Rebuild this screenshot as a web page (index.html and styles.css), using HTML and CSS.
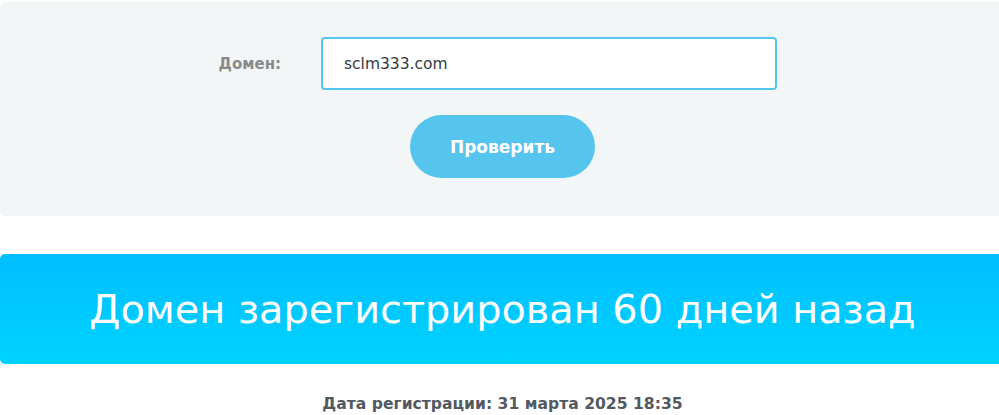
FILE: index.html
```html
<!DOCTYPE html>
<html lang="ru">
<head>
    <meta charset="UTF-8">
    <meta name="viewport" content="width=device-width, initial-scale=1.0">
    <title>Возраст домена</title>
    <link rel="stylesheet" href="styles.css">
</head>
<body>
    <div class="page">
        <form class="check-form" id="check-form">
            <div class="field">
                <label for="domain-input">Домен:</label>
                <input type="text" id="domain-input" value="sclm333.com" autocomplete="off">
            </div>
            <button type="submit" class="check-button">Проверить</button>
        </form>

        <div class="result-banner">Домен зарегистрирован 60 дней назад</div>

        <p class="result-date">Дата регистрации: 31 марта 2025 18:35</p>
    </div>
</body>
</html>
```

FILE: styles.css
```css
:root {
    --panel-bg: #f2f6f7;
    --accent: #56c5ed;
    --banner-top: #00bfff;
    --banner-bottom: #00d2ff;
    --label-color: #8a8a8a;
    --text-color: #333a40;
    --date-color: #535961;
}

html, body {
    overflow: hidden;
}

body {
    margin: 0;
    padding-top: 2px;
    background: #ffffff;
    font-family: "DejaVu Sans", Arial, sans-serif;
    color: var(--text-color);
}

.page {
    width: 1005px;
}

.check-form {
    display: flex;
    flex-direction: column;
    align-items: center;
    gap: 25px;
    padding: 35px 0 38px;
    background-color: var(--panel-bg);
    border-radius: 5px;
}

.field {
    display: grid;
    grid-template-columns: 281px 456px;
    column-gap: 40px;
    align-items: center;
    align-self: flex-start;
}

.field label {
    justify-self: end;
    font-size: 15px;
    font-weight: bold;
    color: var(--label-color);
}

.field input {
    box-sizing: border-box;
    height: 53px;
    padding: 0 22px 0 21px;
    font-family: inherit;
    font-size: 15.5px;
    color: var(--text-color);
    background: #ffffff;
    border: 2px solid var(--accent);
    border-radius: 4px;
    outline: none;
}

.check-button {
    width: 185px;
    height: 63px;
    font-family: inherit;
    font-size: 17px;
    font-weight: bold;
    color: #ffffff;
    background-color: var(--accent);
    border: none;
    border-radius: 32px;
    cursor: pointer;
}

.result-banner {
    margin-top: 38px;
    height: 110px;
    display: flex;
    align-items: center;
    justify-content: center;
    font-size: 39.8px;
    color: #ffffff;
    background: linear-gradient(to bottom, var(--banner-top), var(--banner-bottom));
    border-radius: 5px;
}

.result-date {
    margin: 31px 0 0;
    text-align: center;
    font-size: 15.6px;
    font-weight: bold;
    color: var(--date-color);
}
```
